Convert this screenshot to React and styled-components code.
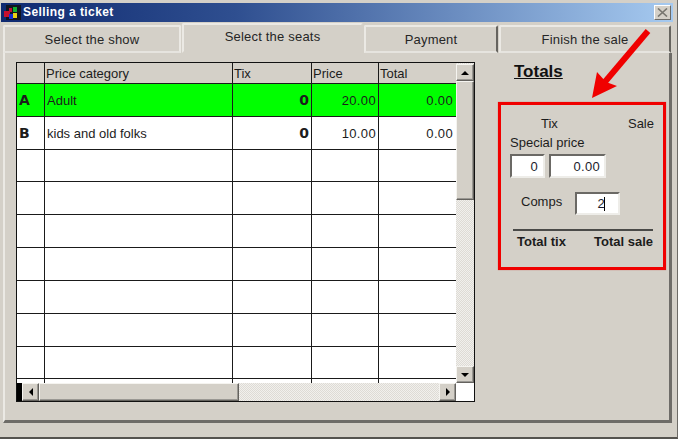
import React from "react";
import styled, { createGlobalStyle } from "styled-components";

const Global = createGlobalStyle`
  html, body { margin: 0; padding: 0; background: #d4d0c8; }
  body { font-family: "Liberation Sans", Arial, sans-serif; color: #1c1c1c; }
`;

const Win = styled.div`
  position: relative;
  width: 678px;
  height: 439px;
  box-sizing: border-box;
  overflow: hidden;
  padding: 3px 0 0 1px;
  background: #d4d0c8;
  border-right: 1px solid #6c6a66;
  border-bottom: 2px solid #55534f;
  display: flex;
  flex-direction: column;
`;

const TitleBar = styled.div`
  height: 19px;
  margin-right: 4px;
  flex: none;
  display: flex;
  align-items: center;
  padding: 0 2px;
  gap: 2px;
  background: linear-gradient(90deg, #0f2a70 0%, #2f4f90 35%, #a6caf0 100%);
`;

const TitleText = styled.span`
  flex: 1;
  font-size: 12px;
  font-weight: bold;
  letter-spacing: 0.42px;
  line-height: 17px;
  color: #fff;
`;

const CloseButton = styled.div`
  width: 17px;
  height: 15px;
  box-sizing: border-box;
  background: #d4d0c8;
  border: 1px solid;
  border-color: #fff #6d6b67 #6d6b67 #fff;
  display: flex;
  align-items: center;
  justify-content: center;
`;

const TabStrip = styled.div`
  height: 31px;
  flex: none;
  display: flex;
  align-items: flex-end;
  padding-left: 2px;
`;

const Tab = styled.div`
  box-sizing: border-box;
  width: ${p => p.$w}px;
  height: ${p => (p.$active ? 30 : 28)}px;
  margin-right: 1px;
  display: flex;
  align-items: center;
  justify-content: center;
  padding-bottom: ${p => (p.$active ? 3 : 0)}px;
  padding-top: ${p => (p.$active ? 0 : 1)}px;
  font-size: 13px;
  letter-spacing: 0.2px;
  color: #262626;
  background: #d4d0c8;
  border-top: 2px solid #ebe9e4;
  border-left: 2px solid #ebe9e4;
  border-right: 2px solid ${p => (p.$light ? "#ebe9e4" : p.$active ? "#d4d0c8" : "#66645f")};
  border-bottom: 2px solid ${p => (p.$active ? "#d4d0c8" : "#e6e4df")};
  border-radius: 2px 2px 0 0;
`;

const Panel = styled.div`
  box-sizing: border-box;
  width: 669px;
  height: 370px;
  margin-left: 2px;
  flex: none;
  display: flex;
  align-items: flex-start;
  padding: 9px 0 0 11px;
  border-left: 2px solid #ebe9e4;
  border-right: 3px solid #6e6c68;
  border-bottom: 3px solid #6e6c68;
`;

const TablePane = styled.div`
  width: 459px;
  height: 340px;
  flex: none;
  box-sizing: border-box;
  border: 1px solid #111;
  background: #fff;
  display: flex;
  flex-direction: column;
`;

const TableBody = styled.div`
  height: 320px;
  flex: none;
  display: flex;
`;

const Rows = styled.div`
  width: 439px;
  height: 320px;
  flex: none;
  overflow: hidden;
`;

const Row = styled.div`
  display: grid;
  grid-template-columns: 28px 188px 79px 67px 77px;
  height: ${p => p.$h}px;
  box-sizing: border-box;
  border-bottom: 1px solid #1a1a1a;
  background: ${p => (p.$head ? "#d4d0c8" : p.$green ? "#00ff00" : "#fff")};
`;

const Cell = styled.div`
  box-sizing: border-box;
  display: flex;
  align-items: ${p => (p.$head ? "flex-end" : "center")};
  justify-content: ${p => (p.$right ? "flex-end" : "flex-start")};
  padding: ${p => (p.$head ? "0 0 2px 1px" : p.$right ? "0 2px 0 0" : "0 0 0 2px")};
  border-right: 1px solid ${p => (p.$last ? "transparent" : "#1a1a1a")};
  font-family: ${p => (p.$mark || p.$bold ? '"DejaVu Sans", sans-serif' : "inherit")};
  font-size: ${p => (p.$mark || p.$bold ? 14 : 13)}px;
  font-weight: ${p => (p.$mark || p.$bold ? "bold" : "normal")};
  color: #1c1c1c;
  letter-spacing: ${p => (p.$right && !p.$bold ? "0.35px" : 0)};
`;

const track = `
  background-color: #dedbd5;
  background-image: conic-gradient(#f1f0ed 25%, #dedbd5 0 50%, #f1f0ed 0 75%, #dedbd5 0);
  background-size: 2px 2px;
`;

const VScroll = styled.div`
  width: 18px;
  height: 320px;
  flex: none;
  box-sizing: border-box;
  padding-top: 1px;
  display: flex;
  flex-direction: column;
  ${track}
`;

const HScroll = styled.div`
  height: 18px;
  flex: none;
  display: flex;
  ${track}
`;

const ScrollBtn = styled.div`
  box-sizing: border-box;
  flex: none;
  width: ${p => p.$w}px;
  height: ${p => p.$h}px;
  background: #d4d0c8;
  border: 1px solid;
  border-color: #f5f4f0 #64625e #64625e #f5f4f0;
  box-shadow: inset -1px -1px 0 #9a9893;
  display: flex;
  align-items: center;
  justify-content: center;
`;

const Thumb = styled(ScrollBtn)``;

const TrackFill = styled.div`
  flex: 1;
`;

const BlackBlock = styled.div`
  width: 5px;
  flex: none;
  background: #000;
`;

const Corner = styled.div`
  width: 18px;
  flex: none;
  background: #fff;
`;

const TotalsColumn = styled.div`
  width: 168px;
  margin-left: 23px;
  flex: none;
  display: flex;
  flex-direction: column;
`;

const TotalsTitle = styled.div`
  margin-left: 16px;
  height: 29px;
  font-size: 17px;
  font-weight: bold;
  line-height: 20px;
  color: #111;
  text-decoration: underline;
`;

const RedBox = styled.div`
  margin-top: 11px;
  box-sizing: border-box;
  width: 168px;
  height: 168px;
  border: 3px solid #f00000;
  box-shadow: 0 0 1px rgba(200, 0, 0, 0.5);
  padding: 11px 9px 0 9px;
  display: flex;
  flex-direction: column;
`;

const SplitLine = styled.div`
  display: flex;
  justify-content: space-between;
  font-size: 13px;
  line-height: 15px;
  padding: ${p => p.$pad};
  font-weight: ${p => (p.$bold ? "bold" : "normal")};
`;

const Label = styled.div`
  font-size: 13px;
  line-height: 15px;
  margin-top: 4px;
`;

const Inputs = styled.div`
  display: flex;
  gap: 4px;
  margin-top: 4px;
`;

const Field = styled.div`
  box-sizing: border-box;
  width: ${p => p.$w}px;
  height: ${p => p.$h}px;
  background: #fff;
  border: 2px solid;
  border-color: #6b6965 #eeede9 #eeede9 #6b6965;
  display: flex;
  align-items: center;
  justify-content: flex-end;
  padding-right: ${p => p.$pr}px;
  font-size: 13px;
  color: #1c1c2c;
  letter-spacing: 0.3px;
`;

const CompsRow = styled.div`
  display: flex;
  align-items: center;
  margin: 14px 0 0 11px;
`;

const CompsLabel = styled.div`
  width: 54px;
  font-size: 13px;
  padding-bottom: 5px;
`;

const Caret = styled.span`
  display: inline-block;
  width: 1px;
  height: 14px;
  margin-left: -1px;
  background: #000;
`;

const Rule = styled.div`
  height: 2px;
  margin: 14px 1px 0 3px;
  background: #4a4a48;
`;

const Arrow = styled.svg`
  position: absolute;
  left: 0;
  top: 0;
  pointer-events: none;
`;

const Triangle = ({ dir }) => {
  const pts = {
    up: "0,5 4,1 8,5",
    down: "0,1 8,1 4,5",
    left: "5,0 5,8 1,4",
    right: "1,0 1,8 5,4",
  }[dir];
  const w = dir === "up" || dir === "down" ? 8 : 6;
  const h = dir === "up" || dir === "down" ? 6 : 8;
  return (
    <svg width={w} height={h} viewBox={`0 0 ${w} ${h}`}>
      <polygon points={pts} fill="#000" />
    </svg>
  );
};

const AppIcon = () => (
  <svg width="18" height="15" viewBox="0 0 18 15" style={{ flex: "none" }}>
    <rect x="3" y="0" width="15" height="15" fill="#11151f" />
    <rect x="1" y="6" width="6" height="6" fill="#c8102e" />
    <rect x="6" y="9" width="4" height="5" fill="#1030d0" />
    <rect x="10" y="2" width="4" height="5" fill="#10b030" />
    <rect x="10" y="8" width="4" height="5" fill="#e8d010" />
    <rect x="6" y="3" width="3" height="4" fill="#c01030" />
  </svg>
);

const tabs = [
  { label: "Select the show", w: 178, light: true },
  { label: "Select the seats", w: 181, active: true },
  { label: "Payment", w: 134 },
  { label: "Finish the sale", w: 172 },
];

const rows = [
  { h: 33, mark: "A", name: "Adult", tix: "0", price: "20.00", total: "0.00", green: true },
  { h: 33, mark: "B", name: "kids and old folks", tix: "0", price: "10.00", total: "0.00" },
  { h: 32 }, { h: 33 }, { h: 33 }, { h: 33 }, { h: 33 }, { h: 33 }, { h: 32 }, { h: 33 },
];

export default function App() {
  return (
    <>
      <Global />
      <Win>
        <TitleBar>
          <AppIcon />
          <TitleText>Selling a ticket</TitleText>
          <CloseButton>
            <svg width="11" height="9" viewBox="0 0 11 9">
              <path d="M1 0.5 L10 8.5 M10 0.5 L1 8.5" stroke="#77756f" strokeWidth="1.6" fill="none" />
            </svg>
          </CloseButton>
        </TitleBar>
        <TabStrip>
          {tabs.map(t => (
            <Tab key={t.label} $w={t.w} $active={t.active} $light={t.light}>{t.label}</Tab>
          ))}
        </TabStrip>
        <Panel>
          <TablePane>
            <TableBody>
              <Rows>
                <Row $head $h={21}>
                  <Cell $head />
                  <Cell $head>Price category</Cell>
                  <Cell $head>Tix</Cell>
                  <Cell $head>Price</Cell>
                  <Cell $head $last>Total</Cell>
                </Row>
                {rows.map((r, i) => (
                  <Row key={i} $h={r.h} $green={r.green}>
                    <Cell $mark>{r.mark}</Cell>
                    <Cell>{r.name}</Cell>
                    <Cell $right $bold>{r.tix}</Cell>
                    <Cell $right>{r.price}</Cell>
                    <Cell $right $last>{r.total}</Cell>
                  </Row>
                ))}
              </Rows>
              <VScroll>
                <ScrollBtn $w={18} $h={17}><Triangle dir="up" /></ScrollBtn>
                <Thumb $w={18} $h={119} />
                <TrackFill />
                <ScrollBtn $w={18} $h={17}><Triangle dir="down" /></ScrollBtn>
              </VScroll>
            </TableBody>
            <HScroll>
              <BlackBlock />
              <ScrollBtn $w={17} $h={18}><Triangle dir="left" /></ScrollBtn>
              <Thumb $w={200} $h={18} />
              <TrackFill />
              <ScrollBtn $w={17} $h={18}><Triangle dir="right" /></ScrollBtn>
              <Corner />
            </HScroll>
          </TablePane>
          <TotalsColumn>
            <TotalsTitle>Totals</TotalsTitle>
            <RedBox>
              <SplitLine $pad="0 0 0 31px">
                <span>Tix</span>
                <span>Sale</span>
              </SplitLine>
              <Label>Special price</Label>
              <Inputs>
                <Field $w={35} $h={24} $pr={5}>0</Field>
                <Field $w={57} $h={24} $pr={4}>0.00</Field>
              </Inputs>
              <CompsRow>
                <CompsLabel>Comps</CompsLabel>
                <Field $w={45} $h={23} $pr={13}>2<Caret /></Field>
              </CompsRow>
              <Rule />
              <SplitLine $bold $pad="3px 1px 0 7px">
                <span>Total tix</span>
                <span>Total sale</span>
              </SplitLine>
            </RedBox>
          </TotalsColumn>
        </Panel>
        <Arrow width="678" height="439" viewBox="0 0 678 439">
          <path d="M648 31 L604 83" stroke="#f00000" strokeWidth="6" fill="none" />
          <polygon points="592,98 597,72 606,82 617,86" fill="#f00000" />
        </Arrow>
      </Win>
    </>
  );
}
